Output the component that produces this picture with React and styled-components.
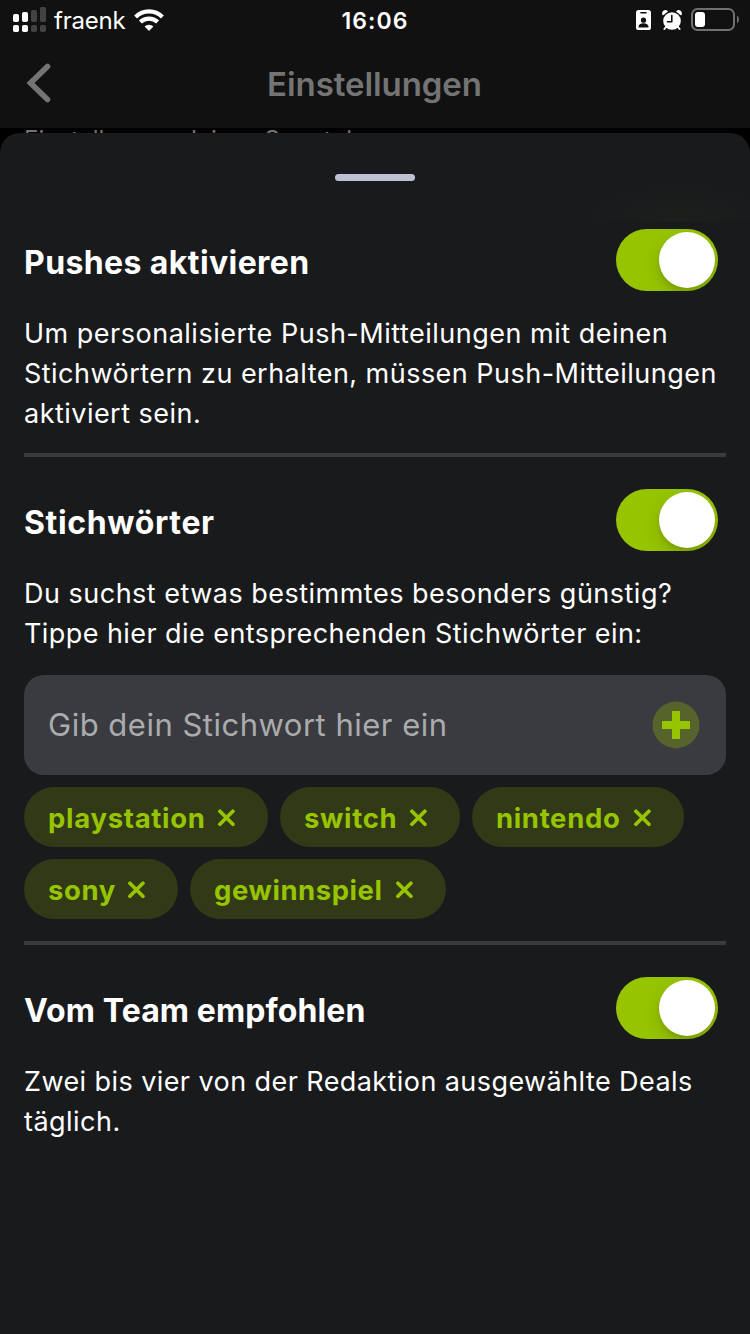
import React, { useState } from 'react';
import styled, { createGlobalStyle } from 'styled-components';

const GlobalStyle = createGlobalStyle`
  body {
    margin: 0;
    background: #000;
  }

  * {
    box-sizing: border-box;
  }
`;

const Screen = styled.div`
  display: flex;
  flex-direction: column;
  width: 750px;
  height: 1334px;
  overflow: hidden;
  background: #000;
  color: #fff;
  font-family: Inter, 'Liberation Sans', sans-serif;
`;

const StatusBar = styled.div`
  display: grid;
  grid-template-columns: 1fr auto 1fr;
  align-items: center;
  flex: 0 0 40px;
  padding: 0 11px 0 13px;
  background: #111;
`;

const StatusGroup = styled.div`
  display: flex;
  align-items: center;
  justify-content: ${props => (props.$end ? 'flex-end' : 'flex-start')};

  svg {
    display: block;
    flex: none;
  }
`;

const Spacer = styled.span`
  flex: 0 0 ${props => props.$size}px;
`;

const Carrier = styled.span`
  margin: 0 8px 0 7px;
  padding-top: 2px;
  font-size: 24px;
  line-height: 38px;
  letter-spacing: -0.2px;
`;

const Clock = styled.span`
  padding: 2px 2px 0 0;
  font-size: 23px;
  font-weight: 600;
  line-height: 38px;
  letter-spacing: 1.1px;
`;

const NavBar = styled.header`
  display: grid;
  grid-template-columns: 80px 1fr 80px;
  align-items: center;
  flex: 0 0 88px;
  background: #111;
`;

const BackButton = styled.button`
  padding: 0 0 2px 26px;
  border: 0;
  background: none;

  svg {
    display: block;
  }
`;

const NavTitle = styled.h1`
  margin: 0 1px 0 0;
  color: #747474;
  font-size: 33px;
  font-weight: 600;
  line-height: 40px;
  letter-spacing: -0.07px;
  text-align: center;
`;

const Underlay = styled.div`
  flex: 0 0 5px;
  overflow: hidden;
  padding-left: 24px;
  color: #747474;
  font-size: 24px;
  line-height: 24px;
  letter-spacing: 0;
  white-space: nowrap;
`;

const Sheet = styled.main`
  flex: 1;
  border-radius: 20px 20px 0 0;
  background: #191a1c;
`;

const Grabber = styled.div`
  display: flex;
  justify-content: center;
  height: 88px;
  padding-top: 41px;
  background: radial-gradient(ellipse 90px 36px at 680px 100%, #1d1f1c, transparent);

  &::before {
    content: '';
    width: 80px;
    height: 7px;
    border-radius: 4px;
    background: #bdc0d2;
  }
`;

const Section = styled.section`
  margin: 0 24px;
  padding: ${props => (props.$first ? '8px 0 20px' : '32px 0 22px')};

  & + & {
    border-top: 4px solid #3a3b40;
  }
`;

const SectionHead = styled.div`
  display: flex;
  align-items: center;
  justify-content: space-between;
  margin-bottom: 22px;
  padding-right: 8px;
`;

const SectionTitle = styled.h2`
  margin: 5px 0 0;
  font-size: 32px;
  font-weight: 700;
  line-height: 40px;
  letter-spacing: ${props => props.$spacing || 0}px;
`;

const Toggle = styled.button`
  display: flex;
  align-items: center;
  justify-content: ${props => (props.$on ? 'flex-end' : 'flex-start')};
  width: 102px;
  height: 62px;
  padding: 3px;
  border: 0;
  border-radius: 31px;
  overflow: hidden;
  background: ${props => (props.$on ? '#96c400' : '#3a3b40')};
`;

const Knob = styled.span`
  width: 56px;
  height: 56px;
  border-radius: 50%;
  background: #fff;
  box-shadow: 0 6px 16px rgba(0, 0, 0, 0.15), 0 4px 4px rgba(0, 0, 0, 0.08);
`;

const Text = styled.p`
  margin: 0;
  font-size: 27px;
  line-height: 40px;
  white-space: nowrap;
`;

const Line = styled.span`
  display: block;
  height: 40px;
  padding-top: 1px;
  letter-spacing: ${props => props.$spacing || 0}px;
`;

const InputBox = styled.div`
  display: flex;
  align-items: center;
  justify-content: space-between;
  height: 100px;
  margin-top: 22px;
  padding: 0 26px 0 24px;
  border-radius: 20px;
  background: #3a3b40;
`;

const Input = styled.input`
  width: 520px;
  padding: 0;
  border: 0;
  outline: 0;
  background: none;
  color: #fff;
  font-family: inherit;
  font-size: 31px;
  line-height: 40px;
  letter-spacing: 0.5px;

  &::placeholder {
    color: #ababad;
    opacity: 1;
  }
`;

const AddButton = styled.button`
  display: flex;
  padding: 0;
  border: 0;
  background: none;
`;

const Tags = styled.div`
  display: flex;
  flex-wrap: wrap;
  gap: 12px;
  margin-top: 12px;
`;

const Tag = styled.span`
  display: flex;
  align-items: center;
  justify-content: space-between;
  width: ${props => props.$width}px;
  height: 60px;
  padding: 1px 32px 0 24px;
  border-radius: 30px;
  background: #323917;
  color: #96c400;
  font-size: 27.5px;
  font-weight: 700;
  line-height: 40px;
  letter-spacing: ${props => props.$spacing || 0}px;

  svg {
    margin-top: 1px;
  }
`;

const SignalIcon = () => (
  <svg width="34" height="26" viewBox="0 0 34 26">
    <g fill="#fff">
      <rect x="0" y="7" width="6" height="8" rx="1.8" />
      <rect x="9" y="5" width="6" height="10" rx="1.8" />
      <rect x="0" y="18" width="6" height="7" rx="1.8" />
      <rect x="9" y="18" width="6" height="7" rx="1.8" />
    </g>
    <g fill="#434343">
      <rect x="18" y="3" width="6" height="12" rx="1.8" />
      <rect x="27" y="0" width="6" height="15" rx="1.8" />
      <rect x="18" y="18" width="6" height="7" rx="1.8" />
      <rect x="27" y="18" width="6" height="7" rx="1.8" />
    </g>
  </svg>
);

const WifiIcon = () => (
  <svg width="30" height="22" viewBox="0 0 30 22">
    <g fill="none" stroke="#fff" strokeWidth="4.2">
      <path d="M1.6 8a19 19 0 0 1 26.8 0" />
      <path d="M6.4 13.1a12.2 12.2 0 0 1 17.2 0" />
    </g>
    <path d="M15 22l-4.4-4.5a6.3 6.3 0 0 1 8.8 0z" fill="#fff" />
  </svg>
);

const BadgeIcon = () => (
  <svg width="15" height="20" viewBox="0 0 15 20">
    <rect width="15" height="20" rx="2.6" fill="#fff" />
    <rect x="4.2" y="2" width="6.6" height="1.5" rx="0.7" fill="#111" />
    <circle cx="7.5" cy="10.2" r="2.6" fill="#111" />
    <path d="M2.4 17.4c0-2.8 2.2-4.2 5.1-4.2s5.1 1.4 5.1 4.2z" fill="#111" />
  </svg>
);

const AlarmIcon = () => (
  <svg width="20" height="21" viewBox="0 0 20 21">
    <g fill="#fff">
      <circle cx="10" cy="11" r="8.8" />
      <path d="M0.9 5.4A3.1 3.1 0 0 1 6 1.4z" />
      <path d="M19.1 5.4A3.1 3.1 0 0 0 14 1.4z" />
    </g>
    <path d="M4 17L2.4 19M16 17l1.6 2" stroke="#fff" strokeWidth="2" strokeLinecap="round" />
    <path
      d="M9.8 5.5v6.2H5.4"
      fill="none"
      stroke="#111"
      strokeWidth="1.6"
      strokeLinecap="round"
      strokeLinejoin="round"
    />
  </svg>
);

const BatteryIcon = () => (
  <svg width="48" height="24" viewBox="0 0 48 24">
    <rect x="1" y="1" width="42" height="21" rx="5.5" fill="none" stroke="#707070" strokeWidth="2" />
    <rect x="4" y="4" width="10" height="15" rx="3" fill="#fff" />
    <path d="M46 7.6c2.6 1.6 2.6 6.2 0 7.8z" fill="#707070" />
  </svg>
);

const BackIcon = () => (
  <svg width="26" height="40" viewBox="0 0 26 40">
    <path
      d="M21.5 3.5L4.5 20L21.5 36.5"
      fill="none"
      stroke="#747474"
      strokeWidth="5.6"
      strokeLinecap="round"
    />
  </svg>
);

const PlusIcon = () => (
  <svg width="48" height="48" viewBox="0 0 48 48">
    <circle cx="24" cy="24" r="23.4" fill="#56632b" />
    <path
      d="M20.6 10h6.8q.6 0 .6.6V20h9.4q.6 0 .6.6v6.8q0 .6-.6.6H28v9.4q0 .6-.6.6h-6.8q-.6 0-.6-.6V28h-9.4q-.6 0-.6-.6v-6.8q0-.6.6-.6H20v-9.4q0-.6.6-.6z"
      fill="#96c400"
    />
  </svg>
);

const CloseIcon = () => (
  <svg width="19" height="18" viewBox="0 0 19 18">
    <path d="M2.9 2.2l13 13M15.9 2.2l-13 13" stroke="#96c400" strokeWidth="3.7" strokeLinecap="round" />
  </svg>
);

const keywords = [
  { name: 'playstation', width: 244, spacing: 0.7 },
  { name: 'switch', width: 180, spacing: 0.65 },
  { name: 'nintendo', width: 212, spacing: 0.65 },
  { name: 'sony', width: 154, spacing: 0.6 },
  { name: 'gewinnspiel', width: 256, spacing: 0.55 },
];

const SettingHead = ({ title, spacing }) => {
  const [on, setOn] = useState(true);
  return (
    <SectionHead>
      <SectionTitle $spacing={spacing}>{title}</SectionTitle>
      <Toggle $on={on} role="switch" aria-checked={on} onClick={() => setOn(!on)}>
        <Knob />
      </Toggle>
    </SectionHead>
  );
};

const App = () => {
  const [tags, setTags] = useState(keywords);

  return (
    <Screen>
      <GlobalStyle />
      <StatusBar>
        <StatusGroup>
          <SignalIcon />
          <Carrier>fraenk</Carrier>
          <WifiIcon />
        </StatusGroup>
        <Clock>16:06</Clock>
        <StatusGroup $end>
          <BadgeIcon />
          <Spacer $size={11} />
          <AlarmIcon />
          <Spacer $size={9} />
          <BatteryIcon />
        </StatusGroup>
      </StatusBar>
      <NavBar>
        <BackButton>
          <BackIcon />
        </BackButton>
        <NavTitle>Einstellungen</NavTitle>
      </NavBar>
      <Underlay>Einstellungen deines Smartphones</Underlay>
      <Sheet>
        <Grabber />
        <Section $first>
          <SettingHead title="Pushes aktivieren" spacing={0.4} />
          <Text>
            <Line $spacing={0.5}>Um personalisierte Push-Mitteilungen mit deinen</Line>
            <Line $spacing={0.47}>Stichwörtern zu erhalten, müssen Push-Mitteilungen</Line>
            <Line $spacing={0.47}>aktiviert sein.</Line>
          </Text>
        </Section>
        <Section>
          <SettingHead title="Stichwörter" spacing={0.65} />
          <Text>
            <Line $spacing={0.49}>Du suchst etwas bestimmtes besonders günstig?</Line>
            <Line $spacing={0.43}>Tippe hier die entsprechenden Stichwörter ein:</Line>
          </Text>
          <InputBox>
            <Input placeholder="Gib dein Stichwort hier ein" />
            <AddButton>
              <PlusIcon />
            </AddButton>
          </InputBox>
          <Tags>
            {tags.map(({ name, width, spacing }) => (
              <Tag
                key={name}
                $width={width}
                $spacing={spacing}
                onClick={() => setTags(tags.filter(t => t.name !== name))}
              >
                {name}
                <CloseIcon />
              </Tag>
            ))}
          </Tags>
        </Section>
        <Section>
          <SettingHead title="Vom Team empfohlen" spacing={0.1} />
          <Text>
            <Line $spacing={0.42}>Zwei bis vier von der Redaktion ausgewählte Deals</Line>
            <Line $spacing={0.47}>täglich.</Line>
          </Text>
        </Section>
      </Sheet>
    </Screen>
  );
};

export default App;
